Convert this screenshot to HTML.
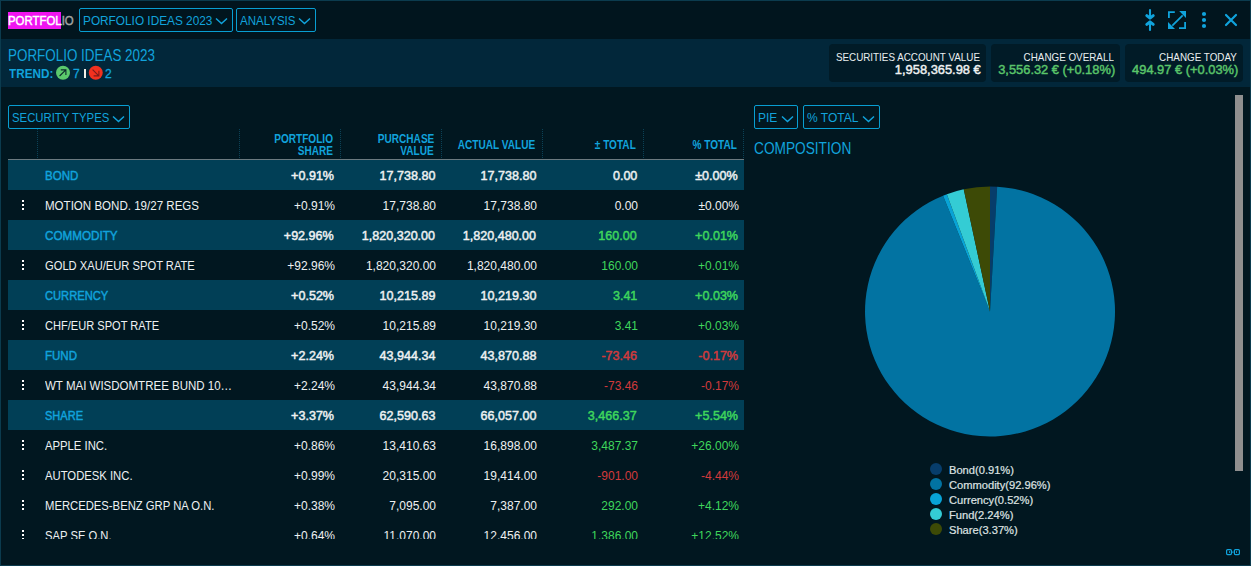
<!DOCTYPE html><html><head><meta charset="utf-8"><style>
*{box-sizing:border-box;margin:0;padding:0}
html,body{width:1251px;height:566px;overflow:hidden;background:#011720}
body{position:relative;font-family:"Liberation Sans",sans-serif;color:#eef1f2}
.a{position:absolute;white-space:nowrap}
.box{position:absolute}
.dd{position:absolute;border:1px solid #089ed2;border-radius:2px;height:24px}
.sep{position:absolute;top:129px;width:1px;height:30px;background:repeating-linear-gradient(to bottom,#0b4257 0 1px,transparent 1px 2px)}
.row{position:absolute;left:8px;width:736px;height:30px}
.g{background:#013f56}
</style></head><body>
<div class="box" style="left:0px;top:0px;width:1251px;height:566px;border:1px solid #0b3b4e;background:#011720"></div>
<div class="box" style="left:1px;top:1px;width:1249px;height:38px;background:#01151e"></div>
<div class="box" style="left:1px;top:39px;width:1249px;height:48px;background:#02273a"></div>
<div class="box" style="left:8px;top:12px;width:53px;height:17px;background:#f014f0"></div>
<div class="box" style="left:79px;top:8px;width:154px;height:24px;border:1px solid #089ed2;border-radius:2px"></div>
<div class="box" style="left:236px;top:8px;width:80px;height:24px;border:1px solid #089ed2;border-radius:2px"></div>
<div class="box" style="left:84px;top:69px;width:2px;height:9px;background:#f2efe6"></div>
<div class="box" style="left:829px;top:44px;width:157px;height:38px;background:#011b27;border-radius:4px"></div>
<div class="box" style="left:991px;top:44px;width:129px;height:38px;background:#011b27;border-radius:4px"></div>
<div class="box" style="left:1125px;top:44px;width:118px;height:38px;background:#011b27;border-radius:4px"></div>
<div class="box" style="left:1235px;top:95px;width:8px;height:376px;background:#8f8f8f"></div>
<div class="box" style="left:8px;top:105px;width:122px;height:24px;border:1px solid #089ed2;border-radius:2px"></div>
<div class="sep" style="left:37px"></div>
<div class="sep" style="left:239px"></div>
<div class="sep" style="left:340px"></div>
<div class="sep" style="left:441px"></div>
<div class="sep" style="left:542px"></div>
<div class="sep" style="left:643px"></div>
<div class="sep" style="left:743px"></div>
<div class="box" style="left:8px;top:159px;width:736px;height:1px;background:#6b7a80"></div>
<div class="box" style="left:754px;top:105px;width:44px;height:24px;border:1px solid #089ed2;border-radius:2px"></div>
<div class="box" style="left:803px;top:105px;width:77px;height:24px;border:1px solid #089ed2;border-radius:2px"></div>
<div class="a" style="left:0;top:0;width:1251px;height:539px;overflow:hidden">
<div class="row g" style="top:160px"></div>
<div class="box" style="left:22px;top:200px;width:2px;height:2px;background:#fff"></div>
<div class="box" style="left:22px;top:204px;width:2px;height:2px;background:#fff"></div>
<div class="box" style="left:22px;top:208px;width:2px;height:2px;background:#fff"></div>
<div class="row g" style="top:220px"></div>
<div class="box" style="left:22px;top:260px;width:2px;height:2px;background:#fff"></div>
<div class="box" style="left:22px;top:264px;width:2px;height:2px;background:#fff"></div>
<div class="box" style="left:22px;top:268px;width:2px;height:2px;background:#fff"></div>
<div class="row g" style="top:280px"></div>
<div class="box" style="left:22px;top:320px;width:2px;height:2px;background:#fff"></div>
<div class="box" style="left:22px;top:324px;width:2px;height:2px;background:#fff"></div>
<div class="box" style="left:22px;top:328px;width:2px;height:2px;background:#fff"></div>
<div class="row g" style="top:340px"></div>
<div class="box" style="left:22px;top:380px;width:2px;height:2px;background:#fff"></div>
<div class="box" style="left:22px;top:384px;width:2px;height:2px;background:#fff"></div>
<div class="box" style="left:22px;top:388px;width:2px;height:2px;background:#fff"></div>
<div class="row g" style="top:400px"></div>
<div class="box" style="left:22px;top:440px;width:2px;height:2px;background:#fff"></div>
<div class="box" style="left:22px;top:444px;width:2px;height:2px;background:#fff"></div>
<div class="box" style="left:22px;top:448px;width:2px;height:2px;background:#fff"></div>
<div class="box" style="left:22px;top:470px;width:2px;height:2px;background:#fff"></div>
<div class="box" style="left:22px;top:474px;width:2px;height:2px;background:#fff"></div>
<div class="box" style="left:22px;top:478px;width:2px;height:2px;background:#fff"></div>
<div class="box" style="left:22px;top:500px;width:2px;height:2px;background:#fff"></div>
<div class="box" style="left:22px;top:504px;width:2px;height:2px;background:#fff"></div>
<div class="box" style="left:22px;top:508px;width:2px;height:2px;background:#fff"></div>
<div class="box" style="left:22px;top:530px;width:2px;height:2px;background:#fff"></div>
<div class="box" style="left:22px;top:534px;width:2px;height:2px;background:#fff"></div>
<div class="box" style="left:22px;top:538px;width:2px;height:2px;background:#fff"></div>
<div id="r0n" class="a" style="left:45px;top:166px;font-size:12px;line-height:20px;color:#11a3dc;font-weight:normal;transform:scaleX(0.96);transform-origin:left center;-webkit-text-stroke:0.45px currentColor;">BOND</div>
<div id="r0c0" class="a" style="right:917px;top:166px;font-size:12px;line-height:20px;color:#eef1f2;font-weight:normal;transform:scaleX(1.046);transform-origin:right center;-webkit-text-stroke:0.45px currentColor;">+0.91%</div>
<div id="r0c1" class="a" style="right:816px;top:166px;font-size:12px;line-height:20px;color:#eef1f2;font-weight:normal;transform:scaleX(1.046);transform-origin:right center;-webkit-text-stroke:0.45px currentColor;">17,738.80</div>
<div id="r0c2" class="a" style="right:715px;top:166px;font-size:12px;line-height:20px;color:#eef1f2;font-weight:normal;transform:scaleX(1.046);transform-origin:right center;-webkit-text-stroke:0.45px currentColor;">17,738.80</div>
<div id="r0c3" class="a" style="right:614px;top:166px;font-size:12px;line-height:20px;color:#eef1f2;font-weight:normal;transform:scaleX(1.046);transform-origin:right center;-webkit-text-stroke:0.45px currentColor;">0.00</div>
<div id="r0c4" class="a" style="right:513px;top:166px;font-size:12px;line-height:20px;color:#eef1f2;font-weight:normal;transform:scaleX(1.046);transform-origin:right center;-webkit-text-stroke:0.45px currentColor;">±0.00%</div>
<div id="r1n" class="a" style="left:45px;top:196px;font-size:12px;line-height:20px;color:#eef1f2;font-weight:normal;transform:scaleX(0.9625);transform-origin:left center;">MOTION BOND. 19/27 REGS</div>
<div id="r1c0" class="a" style="right:916px;top:196px;font-size:12px;line-height:20px;color:#eef1f2;font-weight:normal;">+0.91%</div>
<div id="r1c1" class="a" style="right:815px;top:196px;font-size:12px;line-height:20px;color:#eef1f2;font-weight:normal;">17,738.80</div>
<div id="r1c2" class="a" style="right:714px;top:196px;font-size:12px;line-height:20px;color:#eef1f2;font-weight:normal;">17,738.80</div>
<div id="r1c3" class="a" style="right:613px;top:196px;font-size:12px;line-height:20px;color:#eef1f2;font-weight:normal;">0.00</div>
<div id="r1c4" class="a" style="right:512px;top:196px;font-size:12px;line-height:20px;color:#eef1f2;font-weight:normal;">±0.00%</div>
<div id="r2n" class="a" style="left:45px;top:226px;font-size:12px;line-height:20px;color:#11a3dc;font-weight:normal;transform:scaleX(0.973);transform-origin:left center;-webkit-text-stroke:0.45px currentColor;">COMMODITY</div>
<div id="r2c0" class="a" style="right:917px;top:226px;font-size:12px;line-height:20px;color:#eef1f2;font-weight:normal;transform:scaleX(1.046);transform-origin:right center;-webkit-text-stroke:0.45px currentColor;">+92.96%</div>
<div id="r2c1" class="a" style="right:816px;top:226px;font-size:12px;line-height:20px;color:#eef1f2;font-weight:normal;transform:scaleX(1.046);transform-origin:right center;-webkit-text-stroke:0.45px currentColor;">1,820,320.00</div>
<div id="r2c2" class="a" style="right:715px;top:226px;font-size:12px;line-height:20px;color:#eef1f2;font-weight:normal;transform:scaleX(1.046);transform-origin:right center;-webkit-text-stroke:0.45px currentColor;">1,820,480.00</div>
<div id="r2c3" class="a" style="right:614px;top:226px;font-size:12px;line-height:20px;color:#3fd65c;font-weight:normal;transform:scaleX(1.046);transform-origin:right center;-webkit-text-stroke:0.45px currentColor;">160.00</div>
<div id="r2c4" class="a" style="right:513px;top:226px;font-size:12px;line-height:20px;color:#3fd65c;font-weight:normal;transform:scaleX(1.046);transform-origin:right center;-webkit-text-stroke:0.45px currentColor;">+0.01%</div>
<div id="r3n" class="a" style="left:45px;top:256px;font-size:12px;line-height:20px;color:#eef1f2;font-weight:normal;transform:scaleX(0.931);transform-origin:left center;">GOLD XAU/EUR SPOT RATE</div>
<div id="r3c0" class="a" style="right:916px;top:256px;font-size:12px;line-height:20px;color:#eef1f2;font-weight:normal;">+92.96%</div>
<div id="r3c1" class="a" style="right:815px;top:256px;font-size:12px;line-height:20px;color:#eef1f2;font-weight:normal;">1,820,320.00</div>
<div id="r3c2" class="a" style="right:714px;top:256px;font-size:12px;line-height:20px;color:#eef1f2;font-weight:normal;">1,820,480.00</div>
<div id="r3c3" class="a" style="right:613px;top:256px;font-size:12px;line-height:20px;color:#3fd65c;font-weight:normal;">160.00</div>
<div id="r3c4" class="a" style="right:512px;top:256px;font-size:12px;line-height:20px;color:#3fd65c;font-weight:normal;">+0.01%</div>
<div id="r4n" class="a" style="left:45px;top:286px;font-size:12px;line-height:20px;color:#11a3dc;font-weight:normal;transform:scaleX(0.93);transform-origin:left center;-webkit-text-stroke:0.45px currentColor;">CURRENCY</div>
<div id="r4c0" class="a" style="right:917px;top:286px;font-size:12px;line-height:20px;color:#eef1f2;font-weight:normal;transform:scaleX(1.046);transform-origin:right center;-webkit-text-stroke:0.45px currentColor;">+0.52%</div>
<div id="r4c1" class="a" style="right:816px;top:286px;font-size:12px;line-height:20px;color:#eef1f2;font-weight:normal;transform:scaleX(1.046);transform-origin:right center;-webkit-text-stroke:0.45px currentColor;">10,215.89</div>
<div id="r4c2" class="a" style="right:715px;top:286px;font-size:12px;line-height:20px;color:#eef1f2;font-weight:normal;transform:scaleX(1.046);transform-origin:right center;-webkit-text-stroke:0.45px currentColor;">10,219.30</div>
<div id="r4c3" class="a" style="right:614px;top:286px;font-size:12px;line-height:20px;color:#3fd65c;font-weight:normal;transform:scaleX(1.046);transform-origin:right center;-webkit-text-stroke:0.45px currentColor;">3.41</div>
<div id="r4c4" class="a" style="right:513px;top:286px;font-size:12px;line-height:20px;color:#3fd65c;font-weight:normal;transform:scaleX(1.046);transform-origin:right center;-webkit-text-stroke:0.45px currentColor;">+0.03%</div>
<div id="r5n" class="a" style="left:45px;top:316px;font-size:12px;line-height:20px;color:#eef1f2;font-weight:normal;transform:scaleX(0.923);transform-origin:left center;">CHF/EUR SPOT RATE</div>
<div id="r5c0" class="a" style="right:916px;top:316px;font-size:12px;line-height:20px;color:#eef1f2;font-weight:normal;">+0.52%</div>
<div id="r5c1" class="a" style="right:815px;top:316px;font-size:12px;line-height:20px;color:#eef1f2;font-weight:normal;">10,215.89</div>
<div id="r5c2" class="a" style="right:714px;top:316px;font-size:12px;line-height:20px;color:#eef1f2;font-weight:normal;">10,219.30</div>
<div id="r5c3" class="a" style="right:613px;top:316px;font-size:12px;line-height:20px;color:#3fd65c;font-weight:normal;">3.41</div>
<div id="r5c4" class="a" style="right:512px;top:316px;font-size:12px;line-height:20px;color:#3fd65c;font-weight:normal;">+0.03%</div>
<div id="r6n" class="a" style="left:45px;top:346px;font-size:12px;line-height:20px;color:#11a3dc;font-weight:normal;transform:scaleX(0.96);transform-origin:left center;-webkit-text-stroke:0.45px currentColor;">FUND</div>
<div id="r6c0" class="a" style="right:917px;top:346px;font-size:12px;line-height:20px;color:#eef1f2;font-weight:normal;transform:scaleX(1.046);transform-origin:right center;-webkit-text-stroke:0.45px currentColor;">+2.24%</div>
<div id="r6c1" class="a" style="right:816px;top:346px;font-size:12px;line-height:20px;color:#eef1f2;font-weight:normal;transform:scaleX(1.046);transform-origin:right center;-webkit-text-stroke:0.45px currentColor;">43,944.34</div>
<div id="r6c2" class="a" style="right:715px;top:346px;font-size:12px;line-height:20px;color:#eef1f2;font-weight:normal;transform:scaleX(1.046);transform-origin:right center;-webkit-text-stroke:0.45px currentColor;">43,870.88</div>
<div id="r6c3" class="a" style="right:614px;top:346px;font-size:12px;line-height:20px;color:#d23a3c;font-weight:normal;transform:scaleX(1.046);transform-origin:right center;-webkit-text-stroke:0.45px currentColor;">-73.46</div>
<div id="r6c4" class="a" style="right:513px;top:346px;font-size:12px;line-height:20px;color:#d23a3c;font-weight:normal;transform:scaleX(1.046);transform-origin:right center;-webkit-text-stroke:0.45px currentColor;">-0.17%</div>
<div id="r7n" class="a" style="left:45px;top:376px;font-size:12px;line-height:20px;color:#eef1f2;font-weight:normal;transform:scaleX(0.959);transform-origin:left center;">WT MAI WISDOMTREE BUND 10…</div>
<div id="r7c0" class="a" style="right:916px;top:376px;font-size:12px;line-height:20px;color:#eef1f2;font-weight:normal;">+2.24%</div>
<div id="r7c1" class="a" style="right:815px;top:376px;font-size:12px;line-height:20px;color:#eef1f2;font-weight:normal;">43,944.34</div>
<div id="r7c2" class="a" style="right:714px;top:376px;font-size:12px;line-height:20px;color:#eef1f2;font-weight:normal;">43,870.88</div>
<div id="r7c3" class="a" style="right:613px;top:376px;font-size:12px;line-height:20px;color:#d23a3c;font-weight:normal;">-73.46</div>
<div id="r7c4" class="a" style="right:512px;top:376px;font-size:12px;line-height:20px;color:#d23a3c;font-weight:normal;">-0.17%</div>
<div id="r8n" class="a" style="left:45px;top:406px;font-size:12px;line-height:20px;color:#11a3dc;font-weight:normal;transform:scaleX(0.92);transform-origin:left center;-webkit-text-stroke:0.45px currentColor;">SHARE</div>
<div id="r8c0" class="a" style="right:917px;top:406px;font-size:12px;line-height:20px;color:#eef1f2;font-weight:normal;transform:scaleX(1.046);transform-origin:right center;-webkit-text-stroke:0.45px currentColor;">+3.37%</div>
<div id="r8c1" class="a" style="right:816px;top:406px;font-size:12px;line-height:20px;color:#eef1f2;font-weight:normal;transform:scaleX(1.046);transform-origin:right center;-webkit-text-stroke:0.45px currentColor;">62,590.63</div>
<div id="r8c2" class="a" style="right:715px;top:406px;font-size:12px;line-height:20px;color:#eef1f2;font-weight:normal;transform:scaleX(1.046);transform-origin:right center;-webkit-text-stroke:0.45px currentColor;">66,057.00</div>
<div id="r8c3" class="a" style="right:614px;top:406px;font-size:12px;line-height:20px;color:#3fd65c;font-weight:normal;transform:scaleX(1.046);transform-origin:right center;-webkit-text-stroke:0.45px currentColor;">3,466.37</div>
<div id="r8c4" class="a" style="right:513px;top:406px;font-size:12px;line-height:20px;color:#3fd65c;font-weight:normal;transform:scaleX(1.046);transform-origin:right center;-webkit-text-stroke:0.45px currentColor;">+5.54%</div>
<div id="r9n" class="a" style="left:45px;top:436px;font-size:12px;line-height:20px;color:#eef1f2;font-weight:normal;transform:scaleX(0.94);transform-origin:left center;">APPLE INC.</div>
<div id="r9c0" class="a" style="right:916px;top:436px;font-size:12px;line-height:20px;color:#eef1f2;font-weight:normal;">+0.86%</div>
<div id="r9c1" class="a" style="right:815px;top:436px;font-size:12px;line-height:20px;color:#eef1f2;font-weight:normal;">13,410.63</div>
<div id="r9c2" class="a" style="right:714px;top:436px;font-size:12px;line-height:20px;color:#eef1f2;font-weight:normal;">16,898.00</div>
<div id="r9c3" class="a" style="right:613px;top:436px;font-size:12px;line-height:20px;color:#3fd65c;font-weight:normal;">3,487.37</div>
<div id="r9c4" class="a" style="right:512px;top:436px;font-size:12px;line-height:20px;color:#3fd65c;font-weight:normal;">+26.00%</div>
<div id="r10n" class="a" style="left:45px;top:466px;font-size:12px;line-height:20px;color:#eef1f2;font-weight:normal;transform:scaleX(0.94);transform-origin:left center;">AUTODESK INC.</div>
<div id="r10c0" class="a" style="right:916px;top:466px;font-size:12px;line-height:20px;color:#eef1f2;font-weight:normal;">+0.99%</div>
<div id="r10c1" class="a" style="right:815px;top:466px;font-size:12px;line-height:20px;color:#eef1f2;font-weight:normal;">20,315.00</div>
<div id="r10c2" class="a" style="right:714px;top:466px;font-size:12px;line-height:20px;color:#eef1f2;font-weight:normal;">19,414.00</div>
<div id="r10c3" class="a" style="right:613px;top:466px;font-size:12px;line-height:20px;color:#d23a3c;font-weight:normal;">-901.00</div>
<div id="r10c4" class="a" style="right:512px;top:466px;font-size:12px;line-height:20px;color:#d23a3c;font-weight:normal;">-4.44%</div>
<div id="r11n" class="a" style="left:45px;top:496px;font-size:12px;line-height:20px;color:#eef1f2;font-weight:normal;transform:scaleX(0.939);transform-origin:left center;">MERCEDES-BENZ GRP NA O.N.</div>
<div id="r11c0" class="a" style="right:916px;top:496px;font-size:12px;line-height:20px;color:#eef1f2;font-weight:normal;">+0.38%</div>
<div id="r11c1" class="a" style="right:815px;top:496px;font-size:12px;line-height:20px;color:#eef1f2;font-weight:normal;">7,095.00</div>
<div id="r11c2" class="a" style="right:714px;top:496px;font-size:12px;line-height:20px;color:#eef1f2;font-weight:normal;">7,387.00</div>
<div id="r11c3" class="a" style="right:613px;top:496px;font-size:12px;line-height:20px;color:#3fd65c;font-weight:normal;">292.00</div>
<div id="r11c4" class="a" style="right:512px;top:496px;font-size:12px;line-height:20px;color:#3fd65c;font-weight:normal;">+4.12%</div>
<div id="r12n" class="a" style="left:45px;top:526px;font-size:12px;line-height:20px;color:#eef1f2;font-weight:normal;transform:scaleX(0.936);transform-origin:left center;">SAP SE O.N.</div>
<div id="r12c0" class="a" style="right:916px;top:526px;font-size:12px;line-height:20px;color:#eef1f2;font-weight:normal;">+0.64%</div>
<div id="r12c1" class="a" style="right:815px;top:526px;font-size:12px;line-height:20px;color:#eef1f2;font-weight:normal;">11,070.00</div>
<div id="r12c2" class="a" style="right:714px;top:526px;font-size:12px;line-height:20px;color:#eef1f2;font-weight:normal;">12,456.00</div>
<div id="r12c3" class="a" style="right:613px;top:526px;font-size:12px;line-height:20px;color:#3fd65c;font-weight:normal;">1,386.00</div>
<div id="r12c4" class="a" style="right:512px;top:526px;font-size:12px;line-height:20px;color:#3fd65c;font-weight:normal;">+12.52%</div>
</div>
<svg class="a" style="left:215px;top:17px" width="13" height="8" viewBox="0 0 13 8"><path d="M1 1.5 L6.5 6.5 L12 1.5" fill="none" stroke="#11a3dc" stroke-width="1.5"/></svg>
<svg class="a" style="left:298px;top:17px" width="13" height="8" viewBox="0 0 13 8"><path d="M1 1.5 L6.5 6.5 L12 1.5" fill="none" stroke="#11a3dc" stroke-width="1.5"/></svg>
<svg class="a" style="left:1140px;top:6px" width="110" height="28" viewBox="1140 6 110 28">
 <g fill="none" stroke="#10a3dc" stroke-linecap="round" stroke-linejoin="round">
  <path d="M1150 10 V17 M1150 23 V30" stroke-width="2.1"/>
  <path d="M1146.8 15.6 L1150 18.2 L1153.2 15.6" stroke-width="3"/>
  <path d="M1146.8 24.4 L1150 21.8 L1153.2 24.4" stroke-width="3"/>
 </g>
 <g fill="none" stroke="#10a3dc" stroke-width="1.8">
  <path d="M1174.8 12.05 H1168.9 V18"/>
  <path d="M1179 28.1 H1185.1 V22"/>
  <path d="M1172.3 25.7 L1182.7 15.3"/>
 </g>
 <path d="M1179.2 11.1 H1186 V18 Z" fill="#10a3dc"/>
 <path d="M1168 22 V29 H1175 Z" fill="#10a3dc"/>
 <circle cx="1204" cy="14" r="2.1" fill="#10a3dc"/>
 <circle cx="1204" cy="20" r="2.1" fill="#10a3dc"/>
 <circle cx="1204" cy="26" r="2.1" fill="#10a3dc"/>
 <path d="M1226 15 L1236 25 M1236 15 L1226 25" stroke="#10a3dc" stroke-width="2.2" stroke-linecap="round"/>
</svg>
<svg class="a" style="left:54px;top:64px" width="52" height="18" viewBox="54 64 52 18"><circle cx="63" cy="72.75" r="7" fill="#5bc86c"/><path d="M59.6 76 L65.8 69.8 M60.8 69.9 H65.9 V75" fill="none" stroke="#0b2a2c" stroke-width="1.1"/><circle cx="95.75" cy="72.75" r="7" fill="#f2311f"/><path d="M92.6 69.6 L98.8 75.8 M93.6 75.9 H98.9 V70.7" fill="none" stroke="#7a1c1a" stroke-width="1.1"/></svg>
<svg class="a" style="left:112px;top:115px" width="13" height="8" viewBox="0 0 13 8"><path d="M1 1.5 L6.5 6.5 L12 1.5" fill="none" stroke="#11a3dc" stroke-width="1.5"/></svg>
<svg class="a" style="left:781px;top:115px" width="13" height="8" viewBox="0 0 13 8"><path d="M1 1.5 L6.5 6.5 L12 1.5" fill="none" stroke="#11a3dc" stroke-width="1.5"/></svg>
<svg class="a" style="left:862px;top:115px" width="13" height="8" viewBox="0 0 13 8"><path d="M1 1.5 L6.5 6.5 L12 1.5" fill="none" stroke="#11a3dc" stroke-width="1.5"/></svg>
<svg class="a" style="left:0;top:0" width="1251" height="566"><path d="M990 311.5 L990.00 186.50 A125 125 0 0 1 997.14 186.70 Z" fill="#073d6b"/><path d="M990 311.5 L997.14 186.70 A125 125 0 1 1 943.04 195.66 Z" fill="#0273a2"/><path d="M990 311.5 L943.04 195.66 A125 125 0 0 1 946.85 194.19 Z" fill="#08a3d6"/><path d="M990 311.5 L946.85 194.19 A125 125 0 0 1 963.73 189.29 Z" fill="#34ccd4"/><path d="M990 311.5 L963.73 189.29 A125 125 0 0 1 990.00 186.50 Z" fill="#3d4a06"/><circle cx="936" cy="469" r="6" fill="#073d6b"/><circle cx="936" cy="484" r="6" fill="#0273a2"/><circle cx="936" cy="499" r="6" fill="#08a3d6"/><circle cx="936" cy="514" r="6" fill="#34ccd4"/><circle cx="936" cy="529" r="6" fill="#3d4a06"/></svg>
<svg class="a" style="left:1220px;top:544px" width="26" height="16" viewBox="1220 544 26 16">
 <rect x="1226.6" y="549.6" width="4.8" height="5" rx="1" fill="none" stroke="#10a3dc" stroke-width="1.2"/>
 <rect x="1234.4" y="549.6" width="5" height="5" rx="1" fill="none" stroke="#10a3dc" stroke-width="1.2"/>
 <path d="M1229.5 551 V553 M1236.5 551 V553" stroke="#10a3dc" stroke-width="0.8"/>
 <rect x="1232" y="551.6" width="1.6" height="1" fill="#10a3dc"/>
</svg>
<div id="logo" class="a" style="left:8px;top:11px;font-size:12px;line-height:20px;color:#ffffff;font-weight:normal;transform:scaleX(0.95);transform-origin:left center;-webkit-text-stroke:0.45px currentColor;">PORTFOL<span style="color:#a2a4a2">IO</span></div>
<div id="dd1" class="a" style="left:83px;top:11px;font-size:12px;line-height:20px;color:#11a3dc;font-weight:normal;transform:scaleX(0.985);transform-origin:left center;">PORFOLIO IDEAS 2023</div>
<div id="dd2" class="a" style="left:240px;top:11px;font-size:12px;line-height:20px;color:#11a3dc;font-weight:normal;transform:scaleX(0.96);transform-origin:left center;">ANALYSIS</div>
<div id="title" class="a" style="left:8px;top:46px;font-size:16px;line-height:20px;color:#11a3dc;font-weight:normal;transform:scale(0.839,0.98);transform-origin:left top;">PORFOLIO IDEAS 2023</div>
<div id="trend" class="a" style="left:9px;top:64px;font-size:12px;line-height:20px;color:#11a3dc;font-weight:bold;transform:scaleX(0.977);transform-origin:left center;">TREND:</div>
<div id="t7" class="a" style="left:73px;top:64px;font-size:12px;line-height:20px;color:#11a3dc;font-weight:normal;-webkit-text-stroke:0.3px currentColor;">7</div>
<div id="t2" class="a" style="left:105px;top:64px;font-size:12px;line-height:20px;color:#11a3dc;font-weight:normal;-webkit-text-stroke:0.3px currentColor;">2</div>
<div id="lbl829" class="a" style="right:271px;top:47px;font-size:11px;line-height:20px;color:#e9eef0;font-weight:normal;transform:scaleX(0.895);transform-origin:right center;">SECURITIES ACCOUNT VALUE</div>
<div id="val829" class="a" style="right:270px;top:60px;font-size:13px;line-height:20px;color:#eef1f2;font-weight:normal;transform:scaleX(0.99);transform-origin:right center;-webkit-text-stroke:0.45px currentColor;">1,958,365.98 €</div>
<div id="lbl991" class="a" style="right:137px;top:47px;font-size:11px;line-height:20px;color:#e9eef0;font-weight:normal;transform:scaleX(0.895);transform-origin:right center;">CHANGE OVERALL</div>
<div id="val991" class="a" style="right:136px;top:60px;font-size:13px;line-height:20px;color:#5ac46a;font-weight:normal;transform:scaleX(0.99);transform-origin:right center;-webkit-text-stroke:0.45px currentColor;">3,556.32 € (+0.18%)</div>
<div id="lbl1125" class="a" style="right:14px;top:47px;font-size:11px;line-height:20px;color:#e9eef0;font-weight:normal;transform:scaleX(0.895);transform-origin:right center;">CHANGE TODAY</div>
<div id="val1125" class="a" style="right:13px;top:60px;font-size:13px;line-height:20px;color:#5ac46a;font-weight:normal;transform:scaleX(0.99);transform-origin:right center;-webkit-text-stroke:0.45px currentColor;">494.97 € (+0.03%)</div>
<div id="sectypes" class="a" style="left:12px;top:108px;font-size:12px;line-height:20px;color:#11a3dc;font-weight:normal;transform:scaleX(0.945);transform-origin:left center;">SECURITY TYPES</div>
<div id="th1a" class="a" style="right:918px;top:129px;font-size:12px;line-height:20px;color:#11a3dc;font-weight:bold;transform:scaleX(0.84);transform-origin:right center;">PORTFOLIO</div>
<div id="th1b" class="a" style="right:918px;top:141px;font-size:12px;line-height:20px;color:#11a3dc;font-weight:bold;transform:scaleX(0.84);transform-origin:right center;">SHARE</div>
<div id="th2a" class="a" style="right:817px;top:129px;font-size:12px;line-height:20px;color:#11a3dc;font-weight:bold;transform:scaleX(0.84);transform-origin:right center;">PURCHASE</div>
<div id="th2b" class="a" style="right:817px;top:141px;font-size:12px;line-height:20px;color:#11a3dc;font-weight:bold;transform:scaleX(0.84);transform-origin:right center;">VALUE</div>
<div id="th3" class="a" style="right:716px;top:135px;font-size:12px;line-height:20px;color:#11a3dc;font-weight:bold;transform:scaleX(0.84);transform-origin:right center;">ACTUAL VALUE</div>
<div id="th4" class="a" style="right:615px;top:135px;font-size:12px;line-height:20px;color:#11a3dc;font-weight:bold;transform:scaleX(0.84);transform-origin:right center;">± TOTAL</div>
<div id="th5" class="a" style="right:514px;top:135px;font-size:12px;line-height:20px;color:#11a3dc;font-weight:bold;transform:scaleX(0.84);transform-origin:right center;">% TOTAL</div>
<div id="pie" class="a" style="left:758px;top:108px;font-size:12px;line-height:20px;color:#11a3dc;font-weight:normal;">PIE</div>
<div id="pct" class="a" style="left:807px;top:108px;font-size:12px;line-height:20px;color:#11a3dc;font-weight:normal;">% TOTAL</div>
<div id="comp" class="a" style="left:754px;top:139px;font-size:16px;line-height:20px;color:#11a3dc;font-weight:normal;transform:scale(0.855,0.98);transform-origin:left top;">COMPOSITION</div>
<div id="leg0" class="a" style="left:949px;top:460px;font-size:10.5px;line-height:20px;color:#dfe2e2;font-weight:normal;transform:scaleX(1.06);transform-origin:left center;-webkit-text-stroke:0.2px currentColor;">Bond(0.91%)</div>
<div id="leg1" class="a" style="left:949px;top:475px;font-size:10.5px;line-height:20px;color:#dfe2e2;font-weight:normal;transform:scaleX(1.06);transform-origin:left center;-webkit-text-stroke:0.2px currentColor;">Commodity(92.96%)</div>
<div id="leg2" class="a" style="left:949px;top:490px;font-size:10.5px;line-height:20px;color:#dfe2e2;font-weight:normal;transform:scaleX(1.06);transform-origin:left center;-webkit-text-stroke:0.2px currentColor;">Currency(0.52%)</div>
<div id="leg3" class="a" style="left:949px;top:505px;font-size:10.5px;line-height:20px;color:#dfe2e2;font-weight:normal;transform:scaleX(1.06);transform-origin:left center;-webkit-text-stroke:0.2px currentColor;">Fund(2.24%)</div>
<div id="leg4" class="a" style="left:949px;top:520px;font-size:10.5px;line-height:20px;color:#dfe2e2;font-weight:normal;transform:scaleX(1.06);transform-origin:left center;-webkit-text-stroke:0.2px currentColor;">Share(3.37%)</div>
</body></html>
